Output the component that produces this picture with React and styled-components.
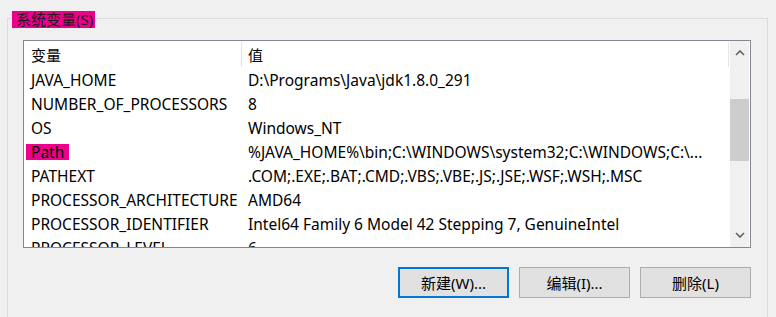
import React from "react";
import styled, { createGlobalStyle } from "styled-components";

const Global = createGlobalStyle`
  html, body { margin: 0; padding: 0; background: #f0f0f0; }
  body {
    font-family: "Noto Sans", "Noto Sans CJK SC", sans-serif;
    font-size: 15.5px;
    color: #000;
    overflow: hidden;
  }
`;

const Page = styled.div`
  width: 776px;
  height: 317px;
  padding: 18px 0 0 7px;
  box-sizing: border-box;
  overflow: hidden;
`;

const Group = styled.div`
  position: relative;
  width: 761px;
  height: 320px;
  box-sizing: border-box;
  border: 1px solid #dcdcdc;
  border-bottom: none;
  padding: 21px 0 0 15px;
`;

const Legend = styled.span`
  position: absolute;
  top: -8px;
  left: 4px;
  height: 17px;
  line-height: 17px;
  padding: 0 2px 0 4px;
  background: #ec008c;
  font-family: "Noto Sans", "Noto Sans CJK SC", sans-serif;
  font-size: 15px;
  color: #1a1a1a;
`;

const ListBox = styled.div`
  width: 728px;
  height: 208px;
  box-sizing: border-box;
  border: 1px solid #828790;
  background: #fff;
  display: flex;
  overflow: hidden;
`;

const Content = styled.div`
  flex: 1;
  overflow: hidden;
  display: flex;
  flex-direction: column;
`;

const Row = styled.div`
  display: flex;
  flex: none;
  height: ${(p) => (p.$header ? 27 : 24)}px;
  align-items: center;
  white-space: nowrap;
`;

const Cell = styled.div`
  flex: none;
  width: ${(p) => p.$w}px;
  height: ${(p) => (p.$header ? 25 : 24)}px;
  box-sizing: border-box;
  padding-left: ${(p) => p.$pad}px;
  display: flex;
  align-items: center;
  overflow: hidden;
  border-right: ${(p) => (p.$sep ? "1px solid #e5e5e5" : "none")};
  font-family: ${(p) => (p.$cjk ? '"Noto Sans CJK SC", sans-serif' : '"Noto Sans", "Noto Sans CJK SC", sans-serif')};
  font-size: ${(p) => (p.$cjk ? "15px" : "15.5px")};
`;

const Mark = styled.span`
  background: #ec008c;
  margin-left: -5px;
  padding: 0 5px 0 5px;
  line-height: 16px;
`;

const ScrollBar = styled.div`
  flex: none;
  width: 19px;
  margin-right: 1px;
  background: #f0f0f0;
  display: flex;
  flex-direction: column;
  align-items: center;
`;

const Arrow = styled.div`
  height: 24px;
  width: 19px;
  display: flex;
  align-items: center;
  justify-content: center;
  flex: none;
`;

const Track = styled.div`
  flex: 1;
  width: 19px;
  padding-top: 34px;
  box-sizing: border-box;
`;

const Thumb = styled.div`
  height: 62px;
  width: 19px;
  background: #cdcdcd;
`;

const Buttons = styled.div`
  display: flex;
  gap: 10px;
  justify-content: flex-end;
  width: 728px;
  margin-top: 19px;
`;

const Button = styled.button`
  width: 111px;
  height: 31px;
  box-sizing: border-box;
  background: #e1e1e1;
  border: ${(p) => (p.$default ? "2px solid #0078d7" : "1px solid #adadad")};
  font-family: "Noto Sans", "Noto Sans CJK SC", sans-serif;
  font-size: 15px;
  color: #000;
  padding: 0;
  margin: 0;
`;

const rows = [
  ["JAVA_HOME", "D:\\Programs\\Java\\jdk1.8.0_291"],
  ["NUMBER_OF_PROCESSORS", "8"],
  ["OS", "Windows_NT"],
  ["Path", "%JAVA_HOME%\\bin;C:\\WINDOWS\\system32;C:\\WINDOWS;C:\\..."],
  ["PATHEXT", ".COM;.EXE;.BAT;.CMD;.VBS;.VBE;.JS;.JSE;.WSF;.WSH;.MSC"],
  ["PROCESSOR_ARCHITECTURE", "AMD64"],
  ["PROCESSOR_IDENTIFIER", "Intel64 Family 6 Model 42 Stepping 7, GenuineIntel"],
  ["PROCESSOR_LEVEL", "6"],
];

const Chevron = ({ down }) => (
  <svg width="10" height="6" viewBox="0 0 10 6">
    <polyline
      points={down ? "1,1 5,5 9,1" : "1,5 5,1 9,5"}
      fill="none"
      stroke="#606060"
      strokeWidth="1.6"
    />
  </svg>
);

export default function App() {
  return (
    <>
      <Global />
      <Page>
        <Group>
          <Legend>系统变量(S)</Legend>
          <ListBox>
            <Content>
              <Row $header>
                <Cell $w={218} $pad={7} $sep $header $cjk>变量</Cell>
                <Cell $w={487} $pad={6} $sep $header $cjk>值</Cell>
              </Row>
              {rows.map(([k, v]) => (
                <Row key={k}>
                  <Cell $w={218} $pad={7}>
                    {k === "Path" ? <Mark>{k}</Mark> : k}
                  </Cell>
                  <Cell $w={487} $pad={6}>{v}</Cell>
                </Row>
              ))}
            </Content>
            <ScrollBar>
              <Arrow><Chevron /></Arrow>
              <Track><Thumb /></Track>
              <Arrow><Chevron down /></Arrow>
            </ScrollBar>
          </ListBox>
          <Buttons>
            <Button $default>新建(W)...</Button>
            <Button>编辑(I)...</Button>
            <Button>删除(L)</Button>
          </Buttons>
        </Group>
      </Page>
    </>
  );
}
